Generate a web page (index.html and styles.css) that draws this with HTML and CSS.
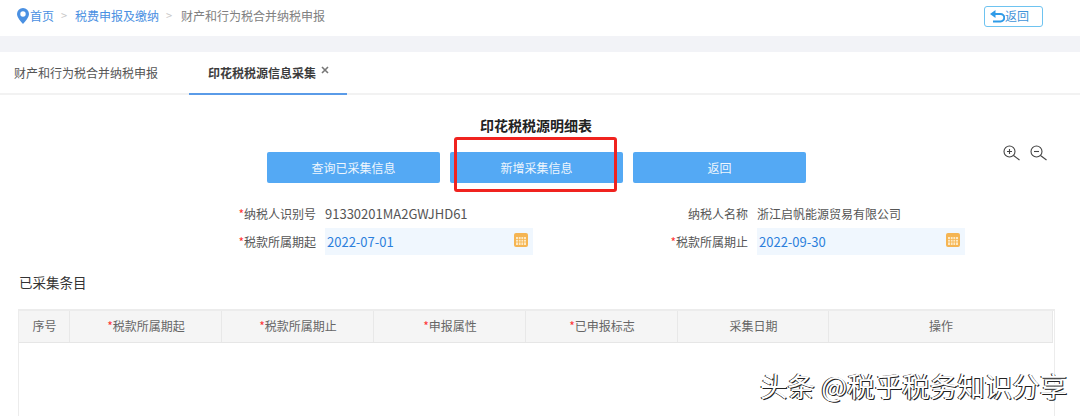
FILE: index.html
```html
<!DOCTYPE html>
<html lang="zh">
<head>
<meta charset="utf-8">
<title>印花税税源明细表</title>
<link rel="stylesheet" href="styles.css">
</head>
<body>
<header class="crumbs">
  <svg class="pin" width="12" height="16" viewBox="0 0 12 16"><path fill-rule="evenodd" fill="#4a90e2" d="M6 0a6 6 0 0 1 6 6c0 3.600-4 7.600-6 10C4 13.600 0 9.600 0 6a6 6 0 0 1 6-6zm0 3.300a2.700 2.700 0 1 0 0 5.400 2.700 2.700 0 0 0 0-5.400z"/></svg>
  <a class="crumb-link">首页</a>
  <span class="crumb-sep">&gt;</span>
  <a class="crumb-link">税费申报及缴纳</a>
  <span class="crumb-sep">&gt;</span>
  <span class="crumb-current">财产和行为税合并纳税申报</span>
  <button class="back-top">
    <svg width="15" height="13" viewBox="0 0 15 13"><path fill="none" stroke="#2f9be8" stroke-width="2" d="M2 4h8.500a3.500 3.500 0 0 1 0 7.500H3"/><path fill="#2f9be8" d="M5.500 0v8L0 4z"/></svg>返回
  </button>
</header>
<div class="band"></div>
<nav class="tabs">
  <div class="tab">财产和行为税合并纳税申报</div>
  <div class="tab tab-active">印花税税源信息采集<svg class="tab-close" width="8" height="8" viewBox="0 0 8 8"><path stroke="#777" stroke-width="1.600" d="M1 1l6 6M7 1L1 7"/></svg></div>
</nav>
<main>
  <h1 class="title">印花税税源明细表</h1>
  <div class="actions">
    <button class="btn">查询已采集信息</button>
    <button class="btn">新增采集信息</button>
    <button class="btn">返回</button>
    <div class="zooms">
      <svg width="18" height="16" viewBox="0 0 18 16"><g fill="none" stroke="#444" stroke-width="1.100"><circle cx="6.500" cy="6.500" r="5.500"/><path d="M10.500 10.500l6 4.500"/><path d="M4 6.500h5M6.500 4v5"/></g></svg>
      <svg width="18" height="16" viewBox="0 0 18 16"><g fill="none" stroke="#444" stroke-width="1.100"><circle cx="6.500" cy="6.500" r="5.500"/><path d="M10.500 10.500l6 4.500"/><path d="M4 6.500h5"/></g></svg>
    </div>
  </div>
  <div class="form">
    <div class="label"><i>*</i>纳税人识别号</div>
    <div class="value value-code">91330201MA2GWJHD61</div>
    <div class="label">纳税人名称</div>
    <div class="value">浙江启帆能源贸易有限公司</div>
    <div class="label"><i>*</i>税款所属期起</div>
    <div class="date"><span>2022-07-01</span>
      <svg class="cal" width="14" height="14" viewBox="0 0 14 14"><rect width="14" height="14" rx="2" fill="#f5b553"/><path fill="#fde9c4" d="M2 4h10v8H2z"/><path stroke="#f5b553" stroke-width=".8" d="M2 6.500h10M2 9h10M4.500 4v8M7 4v8M9.500 4v8"/></svg>
    </div>
    <div class="label"><i>*</i>税款所属期止</div>
    <div class="date"><span>2022-09-30</span>
      <svg class="cal" width="14" height="14" viewBox="0 0 14 14"><rect width="14" height="14" rx="2" fill="#f5b553"/><path fill="#fde9c4" d="M2 4h10v8H2z"/><path stroke="#f5b553" stroke-width=".8" d="M2 6.500h10M2 9h10M4.500 4v8M7 4v8M9.500 4v8"/></svg>
    </div>
  </div>
  <h2 class="section">已采集条目</h2>
  <div class="table">
    <div class="thead">
      <div class="th">序号</div>
      <div class="th"><i>*</i>税款所属期起</div>
      <div class="th"><i>*</i>税款所属期止</div>
      <div class="th"><i>*</i>申报属性</div>
      <div class="th"><i>*</i>已申报标志</div>
      <div class="th">采集日期</div>
      <div class="th">操作</div>
    </div>
  </div>
</main>
<div class="highlight"></div>
<div class="watermark">头条 @税乎税务知识分享</div>
</body>
</html>
```
FILE: styles.css
```css
* { box-sizing: border-box; }
html, body { height: 416px; overflow: hidden; }
body {
  margin: 0;
  position: relative;
  background: #fff;
  color: #555;
  font: 12px/1.4 "Noto Sans CJK SC", "Noto Sans", sans-serif;
}
.crumbs {
  height: 36px;
  display: flex;
  align-items: center;
  padding: 0 37px 4px 17px;
}
.pin { margin-right: 1px; }
.crumb-link { color: #4a90e2; }
.crumb-sep { color: #c8c8c8; margin: 0 8px 0 7px; width: 6px; font-size: 11px; }
.crumb-current { color: #808080; margin-left: 1px; }
.back-top {
  margin-left: auto;
  width: 59px;
  height: 21px;
  padding: 0 0 0 5px;
  display: flex;
  align-items: center;
  border: 1px solid #6ec3f0;
  border-radius: 3px;
  background: #fff;
  color: #3f94d8;
  font: inherit;
}
.band { height: 16px; background: #f2f3f7; }
.tabs {
  height: 43px;
  display: flex;
  border-bottom: 2px solid #f2f2f2;
}
.tab { width: 189px; padding: 13px 0 0 14px; color: #555; }
.tab-active {
  width: 158px;
  height: 43px;
  padding-left: 19px;
  position: relative;
  font-weight: 700;
  color: #3c3c3c;
  border-bottom: 2px solid #5a9be8;
}
.tab-close {
  position: absolute;
  left: 132px;
  top: 14px;
}
.title {
  margin: 20px 0 0;
  height: 20px;
  padding-left: 480px;
  font-size: 14px;
  line-height: 20px;
  font-weight: 700;
  color: #222;
}
.actions {
  display: flex;
  gap: 10px;
  margin-top: 17px;
  padding-left: 267px;
}
.btn {
  width: 173px;
  height: 31px;
  padding: 2px 0 0;
  border: 0;
  border-radius: 2px;
  background: #54a9f4;
  color: #eef6fd;
  font: inherit;
}
.zooms {
  margin-left: 187px;
  display: flex;
  gap: 9px;
  height: 16px;
  margin-top: -7px;
}
.form {
  display: grid;
  grid-template-columns: 316px 208px 206px 208px;
  grid-template-rows: 29px 27px;
  column-gap: 9px;
  align-items: center;
  margin-top: 16px;
}
.label { text-align: right; color: #555; padding-top: 2px; }
.value { color: #555; padding-top: 2px; }
.value-code { font-size: 13px; }
.date {
  height: 27px;
  padding: 2px 5px 0 2px;
  display: flex;
  align-items: center;
  justify-content: space-between;
  background: #f0f7fe;
  color: #2c7fdc;
  font-size: 13px;
}
.cal { margin-top: -6px; }
i { color: #f33; font-style: normal; }
.section {
  margin: 17px 0 0 19px;
  height: 20px;
  font-size: 13.500px;
  line-height: 20px;
  font-weight: 400;
  color: #333;
}
.table {
  margin: 17px 25px 0 18px;
  height: 120px;
  border: 1px solid #ececec;
  border-top-width: 2px;
  border-bottom: 0;
  position: relative;
}
.thead {
  display: grid;
  grid-template-columns: 51px 152px 152px 152px 152px 151px 224px;
  height: 32px;
  margin-right: 1px;
  background: #f5f5f5;
  border-bottom: 1px solid #e6e6e6;
}
.th {
  display: flex;
  align-items: center;
  justify-content: center;
  padding-left: 1px;
  border-right: 1px solid #e8e8e8;
  color: #666;
}
.highlight {
  position: absolute;
  left: 454px;
  top: 137px;
  width: 163px;
  height: 55px;
  border: 3px solid #f0231f;
  border-radius: 3px;
}
.watermark {
  position: absolute;
  left: 760px;
  top: 369px;
  font-size: 27.500px;
  line-height: 1.2;
  white-space: nowrap;
  color: #fff;
  text-shadow: 1px 1px 0 #222, -1px 0 0 #222;
}
```
